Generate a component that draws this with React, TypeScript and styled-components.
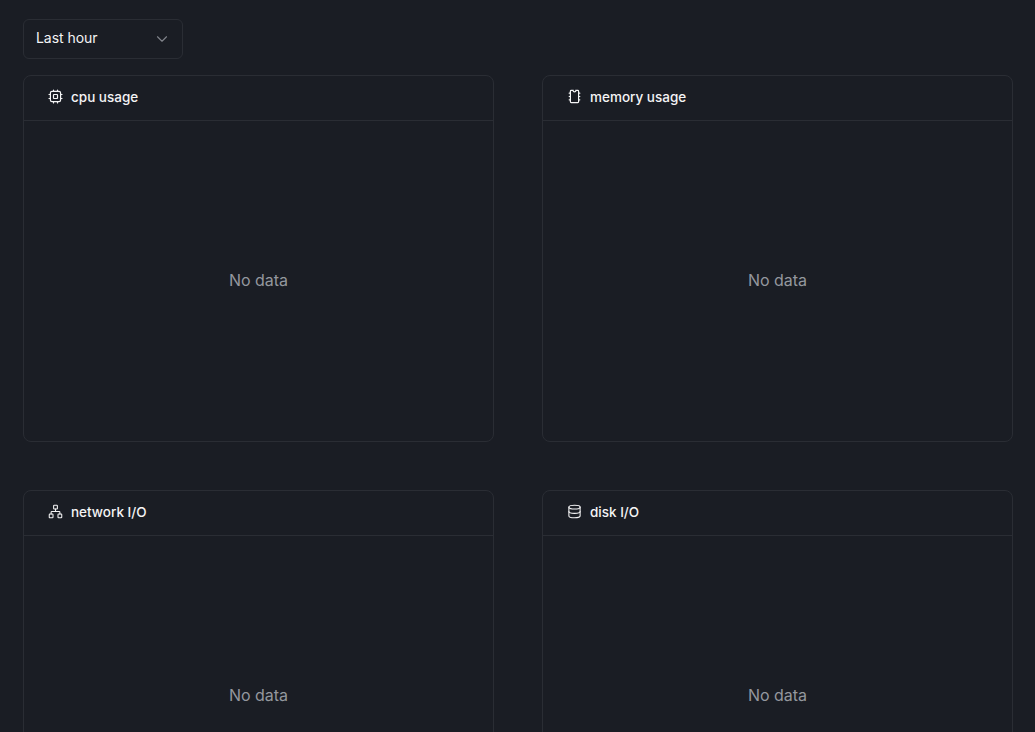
import styled, { createGlobalStyle } from "styled-components";
import { ChevronDown, Database, Network } from "lucide-react";

const GlobalStyle = createGlobalStyle`
  html, body {
    margin: 0;
    height: 100%;
    overflow: hidden;
    background: #1a1d24;
  }

  body {
    font-family: Inter, "Liberation Sans", sans-serif;
    color: #f4f4f5;
  }
`;

const Page = styled.main`
  display: flex;
  flex-direction: column;
  gap: 16px;
  padding: 19px 22px 0 23px;
`;

const RangeSelect = styled.button`
  display: flex;
  align-items: center;
  justify-content: space-between;
  box-sizing: border-box;
  width: 160px;
  height: 40px;
  padding: 0 11px 4px 12px;
  background: transparent;
  border: 1px solid #2a2d34;
  border-radius: 6px;
  color: #f4f4f5;
  font: 400 14px Inter, "Liberation Sans", sans-serif;
  letter-spacing: -0.05px;

  svg {
    color: #81848b;
    margin-top: 4px;
  }
`;

const Grid = styled.div`
  display: grid;
  grid-template-columns: 471px 471px;
  gap: 48px;
`;

const Card = styled.section`
  display: flex;
  flex-direction: column;
  box-sizing: border-box;
  height: 367px;
  border: 1px solid #2a2d34;
  border-radius: 8px;
`;

const CardHeader = styled.header`
  display: flex;
  align-items: center;
  gap: 8px;
  box-sizing: border-box;
  height: 45px;
  padding: 0 24px 3px;
  border-bottom: 1px solid #2a2d34;
  font-size: 13.5px;
  font-weight: 500;
  color: #f4f4f5;

  svg {
    flex: none;
  }
`;

const CardBody = styled.div`
  flex: 1;
  display: flex;
  align-items: center;
  justify-content: center;
  padding-bottom: 2px;
  font-size: 16px;
  color: #94979e;
`;

const ChipIcon = () => (
  <svg
    width="15"
    height="15"
    viewBox="0 0 15 15"
    fill="none"
    stroke="currentColor"
    strokeWidth="1.2"
    strokeLinecap="round"
  >
    <rect x="2.4" y="2.4" width="10.2" height="10.2" rx="1.6" />
    <rect x="5.5" y="5.5" width="4" height="4" rx="0.5" />
    <path d="M5.5 1v.8M9.5 1v.8M5.5 13.2v.8M9.5 13.2v.8M1 5.5h.8M1 9.5h.8M13.2 5.5h.8M13.2 9.5h.8" />
  </svg>
);

// memory chip: notch on top, pins hugging both sides
const MemoryIcon = () => (
  <svg
    width="15"
    height="15"
    viewBox="0 0 15 15"
    fill="none"
    stroke="currentColor"
    strokeWidth="1.2"
    strokeLinecap="round"
  >
    <path d="M4.2 1.4h1.9a1.4 1.4 0 0 0 2.8 0h1.9a.8.8 0 0 1 .8.8v10.6a.8.8 0 0 1-.8.8H4.2a.8.8 0 0 1-.8-.8V2.2a.8.8 0 0 1 .8-.8z" />
    <path d="M2.2 4.2h.6M2.2 7.5h.6M2.2 10.8h.6M12.2 4.2h.6M12.2 7.5h.6M12.2 10.8h.6" />
  </svg>
);

const charts = [
  { title: "cpu usage", icon: <ChipIcon /> },
  { title: "memory usage", icon: <MemoryIcon /> },
  { title: "network I/O", icon: <Network size={15} strokeWidth={1.7} /> },
  { title: "disk I/O", icon: <Database size={15} strokeWidth={1.7} /> },
];

const App = () => {
  return (
    <Page>
      <GlobalStyle />
      <RangeSelect type="button">
        Last hour
        <ChevronDown size={18} strokeWidth={1.5} />
      </RangeSelect>
      <Grid>
        {charts.map((chart) => (
          <Card key={chart.title}>
            <CardHeader>
              {chart.icon}
              {chart.title}
            </CardHeader>
            <CardBody>No data</CardBody>
          </Card>
        ))}
      </Grid>
    </Page>
  );
};

export default App;
